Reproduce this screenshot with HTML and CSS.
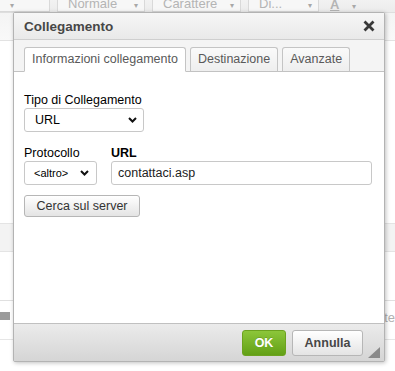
FILE: index.html
```html
<!DOCTYPE html>
<html>
<head>
    <meta charset="utf-8">
    <title>Collegamento</title>
    <link rel="stylesheet" href="styles.css">
</head>
<body>
    <!-- editor dietro al dialogo -->
    <div class="editor">
        <div class="toolbar">
            <div class="combo combo-first"><span class="arrow">&#9662;</span></div>
            <div class="combo combo-format"><span class="combo-text">Normale</span><span class="arrow">&#9662;</span></div>
            <div class="combo combo-font"><span class="combo-text">Carattere</span><span class="arrow">&#9662;</span></div>
            <div class="combo combo-size"><span class="combo-text">Di...</span><span class="arrow">&#9662;</span></div>
            <div class="combo combo-color"><span class="combo-text color-a">A</span><span class="arrow">&#9662;</span></div>
        </div>
        <div class="toolbar2"></div>
        <div class="edit-area"></div>
        <div class="band"></div>
        <div class="edit-area2"></div>
        <div class="statusbar">
            <span class="status-icon"></span>
            <span class="status-text">te</span>
        </div>
        <div class="bottom-row">
            <span class="mini mini1"></span>
            <span class="mini mini2"></span>
        </div>
    </div>

    <div class="dialog">
        <div class="dlg-title">
            <span>Collegamento</span>
            <svg class="close" width="12" height="12" viewBox="0 0 12 12">
                <path d="M1.5 1.5 L10.5 10.5 M10.5 1.5 L1.5 10.5" stroke="#383838" stroke-width="2.8" fill="none"/>
            </svg>
        </div>
        <div class="tabs">
            <div class="tab active">Informazioni collegamento</div>
            <div class="tab">Destinazione</div>
            <div class="tab">Avanzate</div>
        </div>
        <div class="dlg-body">
            <div class="field-label">Tipo di Collegamento</div>
            <div class="select select-type">
                <span>URL</span>
                <svg width="9" height="6" viewBox="0 0 9 6"><path d="M1 1 L4.5 4.5 L8 1" stroke="#111" stroke-width="2" fill="none"/></svg>
            </div>
            <div class="row">
                <div class="col-proto">
                    <div class="field-label">Protocollo</div>
                    <div class="select select-proto">
                        <span class="small">&lt;altro&gt;</span>
                        <svg width="9" height="6" viewBox="0 0 9 6"><path d="M1 1 L4.5 4.5 L8 1" stroke="#111" stroke-width="2" fill="none"/></svg>
                    </div>
                </div>
                <div class="col-url">
                    <div class="field-label bold">URL</div>
                    <div class="input">contattaci.asp</div>
                </div>
            </div>
            <div class="btn btn-browse">Cerca sul server</div>
        </div>
        <div class="dlg-footer">
            <div class="btn btn-ok">OK</div>
            <div class="btn btn-cancel">Annulla</div>
            <svg class="resize" width="12" height="11" viewBox="0 0 12 11"><path d="M12 0 L12 11 L0 11 Z" fill="#8a8a8a"/></svg>
        </div>
    </div>
</body>
</html>
```

FILE: styles.css
```css
body {
    margin: 0;
    width: 395px;
    height: 371px;
    overflow: hidden;
    background-color: #ffffff;
    font-family: "Liberation Sans", Arial, sans-serif;
    position: relative;
}

/* editor */
.editor {
    display: flex;
    flex-direction: column;
    height: 371px;
}
.toolbar {
    height: 12px;
    background: linear-gradient(#f2f2f2, #ececec);
    border-bottom: 1px solid #dedede;
    display: flex;
    align-items: flex-end;
    gap: 7px;
    overflow: hidden;
}
.combo {
    height: 22px;
    box-sizing: border-box;
    border: 1px solid #d9d9d9;
    border-top: none;
    background: #f7f7f7;
    display: flex;
    align-items: flex-end;
    justify-content: space-between;
    padding: 0 6px 0 10px;
    color: #b4b4b4;
    font-size: 13px;
    line-height: 14px;
    flex-shrink: 0;
}
.arrow {
    font-size: 8px;
    color: #a8a8a8;
    line-height: 10px;
}
.combo-first { width: 51px; margin-left: -1px; }
.combo-format { width: 88px; }
.combo-font { width: 89px; }
.combo-size { width: 71px; }
.combo-color { width: 32px; border: none; background: transparent; padding: 0 2px 0 4px; }
.color-a {
    font-weight: bold;
    text-decoration: underline;
}
.toolbar2 {
    height: 27px;
    background: linear-gradient(#f4f4f4, #f9f9f9);
    border-bottom: 1px solid #e2e2e2;
}
.edit-area {
    height: 182px;
    background: #ffffff;
}
.band {
    height: 27px;
    background: #f3f3f3;
    border-top: 1px solid #e4e4e4;
    border-bottom: 1px solid #e4e4e4;
}
.edit-area2 {
    height: 48px;
}
.statusbar {
    height: 38px;
    border-top: 1px solid #e0e0e0;
    border-bottom: 1px solid #e6e6e6;
    display: flex;
    justify-content: space-between;
    align-items: center;
}
.status-icon {
    width: 10px;
    height: 8px;
    background: #9b9b9b;
    margin-top: -8px;
}
.status-text {
    color: #b0b0b0;
    font-size: 13px;
    margin-top: -6px;
}
.bottom-row {
    flex: 1;
    position: relative;
    display: flex;
    gap: 90px;
    padding-left: 48px;
}
.mini {
    width: 8px;
    height: 9px;
    border: 1px solid #e3e3e3;
    border-top: none;
}

/* dialogo */
.dialog {
    position: absolute;
    left: 13px;
    top: 12px;
    width: 372px;
    height: 350px;
    box-sizing: border-box;
    border: 1px solid #b3b3b3;
    border-radius: 2px;
    box-shadow: 1px 1px 4px rgba(0, 0, 0, 0.25);
    background: #ffffff;
    display: flex;
    flex-direction: column;
}
.dlg-title {
    height: 27px;
    box-sizing: border-box;
    border-bottom: 1px solid #cfcfcf;
    background: linear-gradient(#f6f6f6, #e9e9e9);
    display: flex;
    justify-content: space-between;
    align-items: center;
    padding: 0 9px 0 10px;
    font-size: 13.5px;
    font-weight: bold;
    color: #474747;
}
.close {
    margin-top: 0px;
}
.tabs {
    height: 32px;
    box-sizing: border-box;
    background: #f4f4f4;
    border-bottom: 1px solid #c2c2c2;
    display: flex;
    align-items: flex-end;
    padding: 6px 0 0 10px;
    gap: 4px;
}
.tab {
    height: 25px;
    box-sizing: border-box;
    border: 1px solid #c4c4c4;
    border-bottom: none;
    border-radius: 3px 3px 0 0;
    background: linear-gradient(#fafafa, #eeeeee);
    padding: 0 7px;
    font-size: 12.5px;
    line-height: 23px;
    color: #595959;
    margin-bottom: -1px;
    border-bottom: 1px solid #c2c2c2;
}
.tab.active {
    background: #ffffff;
    border-bottom: 1px solid #ffffff;
}
.dlg-body {
    flex: 1;
    padding: 21px 12px 0 10px;
}
.field-label {
    font-size: 12.5px;
    line-height: 15px;
    color: #000000;
}
.bold {
    font-weight: bold;
}
.select {
    height: 24px;
    box-sizing: border-box;
    border: 1px solid #c8c8c8;
    border-radius: 3px;
    display: flex;
    justify-content: space-between;
    align-items: center;
    font-size: 12.5px;
    color: #000;
}
.select-type {
    width: 120px;
    padding: 0 6px 0 10px;
    margin-bottom: 14px;
}
.select-proto {
    width: 73px;
    padding: 0 7px 0 9px;
}
.small {
    font-size: 11px;
}
.row {
    display: flex;
    gap: 14px;
}
.col-url {
    flex: 1;
}
.input {
    height: 24px;
    box-sizing: border-box;
    border: 1px solid #c8c8c8;
    border-radius: 3px;
    padding: 0 6px;
    font-size: 12.5px;
    line-height: 22px;
    color: #222;
}
.btn {
    box-sizing: border-box;
    border: 1px solid #b6b6b6;
    border-radius: 3px;
    background: linear-gradient(#ffffff, #e4e4e4);
    font-size: 12.5px;
    color: #333333;
    text-align: center;
}
.btn-browse {
    width: 116px;
    height: 22px;
    line-height: 20px;
    margin-top: 10px;
}
.dlg-footer {
    height: 38px;
    box-sizing: border-box;
    border-top: 1px solid #c0c0c0;
    background: linear-gradient(#ebebeb, #d5d5d5);
    display: flex;
    justify-content: flex-end;
    align-items: center;
    padding-right: 4px;
}
.btn-ok {
    width: 44px;
    height: 26px;
    line-height: 24px;
    font-weight: bold;
    color: #ffffff;
    border-color: #6ca21f;
    background: linear-gradient(#8cc63a, #62a016);
    text-shadow: 0 -1px 0 rgba(0, 0, 0, 0.15);
    margin-right: 6px;
}
.btn-cancel {
    width: 71px;
    height: 26px;
    line-height: 24px;
    font-weight: bold;
    color: #474747;
}
.resize {
    align-self: flex-end;
    margin: 0 0 3px 5px;
}
```
